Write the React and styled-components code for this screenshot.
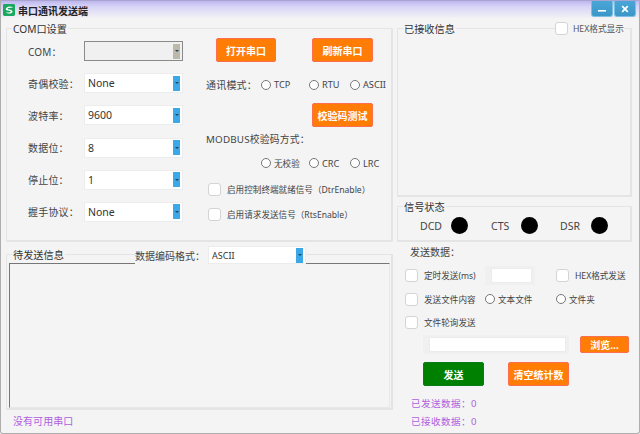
import React from 'react';
import styled, { createGlobalStyle } from 'styled-components';

const Global = createGlobalStyle`
  html, body { margin: 0; padding: 0; width: 640px; height: 434px; overflow: hidden; background: #f4f4f4; }
  * { box-sizing: border-box; }
  body { font-family: "Noto Sans", "Noto Sans CJK SC", sans-serif; color: #333; }
`;

const Win = styled.div`
  width: 640px; height: 434px; background: #f4f4f4;
  border: 1px solid #aeaeae; border-top: none; border-radius: 0 0 3px 3px;
  display: flex; flex-direction: column; overflow: hidden;
`;
const TitleBar = styled.div`
  height: 18px; flex: none; display: flex; align-items: flex-start;
  background: linear-gradient(#bdb6ee 0, #d6d2f6 5px, #f4f4f4 18px);
  border-top: 1px solid #a9a4cf; padding-left: 2px;
`;
const Logo = styled.svg`width: 12px; height: 12px; margin-top: 3px; flex: none;`;
const TitleText = styled.div`
  font-size: 10px; font-weight: 700; line-height: 14px; color: #222; margin: 3px 0 0 3px; flex: 1;
`;
const WinButtons = styled.div`display: flex; gap: 1px; margin-right: 3px;`;
const WinButton = styled.div`
  width: 22px; height: 16px; background: linear-gradient(#4aa6d6, #3a97c8);
  border: 1px solid #7dbfe2; border-top: none; border-radius: 0 0 3px 3px;
  color: #fff; display: flex; align-items: center; justify-content: center;
`;
const Body = styled.div`flex: 1; display: flex; flex-direction: column; padding: 10px 7px 0 5px;`;
const TopRow = styled.div`display: flex; gap: 4px; height: 214px; flex: none;`;
const Box = styled.section`
  position: relative; border: 1px solid #e4e4e4; border-width: 1px 2px 2px 1px; border-radius: 1px;
  background: #f4f4f4;
`;
const Legend = styled.div`
  position: absolute; top: -6px; left: 5px; background: #f4f4f4; padding: 0 1px;
  font-size: 10.2px; line-height: 13px; color: #333; white-space: nowrap;
`;
const ComBox = styled(Box)`
  width: 387px; flex: none; display: flex; padding: 12px 0 0 21px;
`;
const FormGrid = styled.div`
  width: 178px; flex: none; display: grid; grid-template-columns: 56px 99px;
  grid-auto-rows: 20px; row-gap: 12.2px; align-items: center;
`;
const FieldLabel = styled.div`font-size: 10px; letter-spacing: .2px; color: #444; white-space: nowrap;`;
const ComboWrap = styled.div`
  width: ${p => p.$w || 99}px; height: ${p => p.$h || 20}px; display: flex; align-items: center;
  background: ${p => p.$disabled ? '#f0f0f0' : '#fff'};
  border: 1px solid ${p => p.$disabled ? '#8a8a8a' : '#ececec'};
  padding: 1px 1px 1px 3px; flex: none;
  font-size: ${p => p.$small ? 9 : 10.5}px; color: #333;
`;
const ComboValue = styled.span`flex: 1; white-space: nowrap;`;
const ComboArrow = styled.span`
  width: 7px; height: 15px; margin-right: 1px; flex: none; display: flex; align-items: center; justify-content: center;
  background: ${p => p.$disabled ? '#bdb8ac' : '#3ba8e8'};
  &::after { content: ""; border: 2px solid transparent; border-top: 2px solid #24475c; border-bottom: none; }
`;
const Combo = ({ value, disabled, small, w, h }) => (
  <ComboWrap $disabled={disabled} $small={small} $w={w} $h={h}>
    <ComboValue>{value}</ComboValue>
    <ComboArrow $disabled={disabled} />
  </ComboWrap>
);
const ModeCol = styled.div`flex: 1; display: flex; flex-direction: column; margin-top: -3px;`;
const ButtonRow = styled.div`display: flex; gap: 36px; padding-left: 10px;`;
const Btn = styled.div`
  width: ${p => p.$w || 61}px; height: ${p => p.$h || 24}px; flex: none;
  background: ${p => p.$green ? '#008000' : '#ff7d05'};
  border: 1px solid ${p => p.$green ? '#0f7a1a' : '#fb6e4e'}; border-radius: 2px;
  color: #fff; font-size: 10px; font-weight: 700; display: flex; align-items: center; justify-content: center;
  white-space: nowrap;
`;
const RadioRow = styled.div`
  display: grid; grid-template-columns: 55px 48px 41px auto; align-items: center;
  height: 14px; margin-top: ${p => p.$mt}px; color: #444;
`;
const RadioOption = styled.div`
  display: flex; align-items: center; gap: 3px; white-space: nowrap; color: #444;
  font-size: ${p => p.$latin ? 9.2 : 8.6}px;
`;
const RadioDot = styled.span`
  width: 10px; height: 10px; flex: none; border-radius: 50%; border: 1px solid #777; background: #fff;
`;
const TestRow = styled.div`display: flex; padding-left: 106px; margin-top: 12px;`;
const ModbusLabel = styled.div`height: 14px; line-height: 14px; margin-top: 6px; font-size: 9.8px; color: #444; letter-spacing: .2px; white-space: nowrap;`;
const CheckRow = styled.div`
  display: flex; align-items: center; gap: 6px; height: 14px; margin-top: ${p => p.$mt || 0}px; margin-left: ${p => p.$ml || 0}px;
  font-size: 8.6px; color: #444; white-space: nowrap; flex: none;
`;
const CheckBox = styled.span`
  width: 13px; height: 13px; flex: none; background: #fff; border: 1px solid #d4d4d4; border-radius: 3px;
`;
const RightTop = styled.div`flex: 1; display: flex; flex-direction: column; gap: 9px;`;
const RecvBox = styled(Box)`height: 169px; flex: none;`;
const HexToggle = styled.div`
  position: absolute; top: -7px; right: 6px; background: #f4f4f4; display: flex; align-items: center; gap: 5px;
  font-size: 8.7px; color: #555; white-space: nowrap;
`;
const SignalBox = styled(Box)`
  flex: 1; display: flex; align-items: center; padding: 4px 0 0 22px;
`;
const Signal = styled.div`
  display: flex; align-items: center; gap: ${p => p.$gap}px; width: ${p => p.$w}px; flex: none;
  font-size: 10.5px; color: #444;
`;
const Dot = styled.span`width: 17px; height: 17px; border-radius: 50%; background: #000; flex: none;`;
const BottomRow = styled.div`display: flex; gap: 4px; flex: 1; min-height: 0; margin-top: 12px;`;
const SendCol = styled.div`width: 387px; flex: none; display: flex; flex-direction: column;`;
const SendBox = styled(Box)`height: 156px; flex: none; padding: 8px 1px 0 2px;`;
const EncodingBar = styled.div`
  position: absolute; top: -9px; left: 128px; display: flex; align-items: center; gap: 3px;
  background: #f4f4f4; font-size: 10px; color: #444; white-space: nowrap;
`;
const TextArea = styled.div`
  width: 100%; height: 145px; background: #f4f4f4;
  border: 1px solid #e8e8e8; border-top-color: #777; border-left-color: #777;
`;
const Status = styled.div`
  font-size: 10px; color: #b060e0; padding: 4px 0 0 7px; line-height: 14px; letter-spacing: .05px;
`;
const SendPanel = styled.div`flex: 1; display: flex; flex-direction: column; position: relative; padding-left: 8px; margin-top: -9px;`;
const SendTitle = styled.div`font-size: 10px; color: #444; padding-left: 5px; height: 14px; line-height: 14px;`;
const OptRow = styled.div`
  display: grid; grid-template-columns: 80px 71px auto; align-items: center; height: ${p => p.$h || 14}px;
  margin-top: ${p => p.$mt}px;
`;
const SmallInput = styled.div`
  width: ${p => p.$w}px; height: 19px; background: #fff; flex: none;
  border-style: solid; border-color: #f0f0f0; border-width: 2px 3px 2px 6px;
  box-shadow: 0 0 0 1px #ececec inset;
`;
const PathRow = styled.div`display: flex; align-items: center; gap: 11px; margin-top: 6px; padding-left: 18px;`;
const ActionRow = styled.div`display: flex; gap: 24px; margin-top: 8px; padding-left: 18px;`;
const Stats = styled.div`
  margin-top: 9px; padding-left: 6px; font-size: 9.6px; line-height: 18px; color: #b060e0; letter-spacing: .4px; white-space: nowrap;
`;

const Radio = ({ children, latin }) => <RadioOption $latin={latin}><RadioDot />{children}</RadioOption>;
const Check = ({ children, mt, ml }) => <CheckRow $mt={mt} $ml={ml}><CheckBox />{children}</CheckRow>;

const fields = [
  ['奇偶校验：', 'None'], ['波特率：', '9600'], ['数据位：', '8'], ['停止位：', '1'], ['握手协议：', 'None'],
];

export default function App() {
  return (
    <Win>
      <Global />
      <TitleBar>
        <Logo viewBox="0 0 13 13">
          <rect width="13" height="13" rx="1.5" fill="#1aa860" />
          <path d="M10.5 3.2C7.5 1.8 3.2 3 3 5.4c-.2 2 3.6 1.6 5 2.3.8.4.3 1.3-1.2 1.5-1.3.2-2.6 0-3.6-.5 1.4 2 5.8 2.5 7-.1.8-1.8-3-2.6-4.5-2.9-1-.2-1-1 .2-1.3 1.4-.3 3.2-.3 4.6-.7z" fill="#fff" />
        </Logo>
        <TitleText>串口通讯发送端</TitleText>
        <WinButtons>
          <WinButton>
            <svg width="10" height="8" viewBox="0 0 10 8"><rect x="1" y="5" width="8" height="1.6" fill="#fff" /></svg>
          </WinButton>
          <WinButton>
            <svg width="8" height="8" viewBox="0 0 8 8"><path d="M1.2 1.2l5.6 5.6M6.8 1.2L1.2 6.8" stroke="#fff" strokeWidth="1.7" /></svg>
          </WinButton>
        </WinButtons>
      </TitleBar>
      <Body>
        <TopRow>
          <ComBox>
            <Legend>COM口设置</Legend>
            <FormGrid>
              <FieldLabel>COM：</FieldLabel>
              <Combo disabled />
              {fields.map(([l, v]) => (
                <React.Fragment key={l}>
                  <FieldLabel>{l}</FieldLabel>
                  <Combo value={v} />
                </React.Fragment>
              ))}
            </FormGrid>
            <ModeCol>
              <ButtonRow><Btn $w={60}>打开串口</Btn><Btn>刷新串口</Btn></ButtonRow>
              <RadioRow $mt={15}>
                <FieldLabel>通讯模式：</FieldLabel>
                <Radio latin>TCP</Radio><Radio latin>RTU</Radio><Radio latin>ASCII</Radio>
              </RadioRow>
              <TestRow><Btn>校验码测试</Btn></TestRow>
              <ModbusLabel>MODBUS校验码方式：</ModbusLabel>
              <RadioRow $mt={9}>
                <span />
                <Radio>无校验</Radio><Radio latin>CRC</Radio><Radio latin>LRC</Radio>
              </RadioRow>
              <Check mt={12} ml={2}>启用控制终端就绪信号（DtrEnable）</Check>
              <Check mt={11} ml={2}>启用请求发送信号（RtsEnable）</Check>
            </ModeCol>
          </ComBox>
          <RightTop>
            <RecvBox>
              <Legend>已接收信息</Legend>
              <HexToggle><CheckBox />HEX格式显示</HexToggle>
            </RecvBox>
            <SignalBox>
              <Legend>信号状态</Legend>
              <Signal $w={71} $gap={9}>DCD<Dot /></Signal>
              <Signal $w={69} $gap={12}>CTS<Dot /></Signal>
              <Signal $w={60} $gap={11}>DSR<Dot /></Signal>
            </SignalBox>
          </RightTop>
        </TopRow>
        <BottomRow>
          <SendCol>
            <SendBox>
              <Legend>待发送信息</Legend>
              <EncodingBar>数据编码格式：<Combo value="ASCII" small w={98} h={18} /></EncodingBar>
              <TextArea />
            </SendBox>
            <Status>没有可用串口</Status>
          </SendCol>
          <SendPanel>
            <SendTitle>发送数据：</SendTitle>
            <OptRow $mt={7} $h={19}>
              <Check>定时发送(ms)</Check>
              <SmallInput $w={50} />
              <Check>HEX格式发送</Check>
            </OptRow>
            <OptRow $mt={7}>
              <Check>发送文件内容</Check>
              <Radio>文本文件</Radio>
              <Radio>文件夹</Radio>
            </OptRow>
            <OptRow $mt={9}>
              <Check>文件轮询发送</Check>
            </OptRow>
            <PathRow>
              <SmallInput $w={146} />
              <Btn $w={49} $h={17}>浏览...</Btn>
            </PathRow>
            <ActionRow>
              <Btn $green>发送</Btn>
              <Btn>清空统计数</Btn>
            </ActionRow>
            <Stats>已发送数据：0<br />已接收数据：0</Stats>
          </SendPanel>
        </BottomRow>
      </Body>
    </Win>
  );
}
